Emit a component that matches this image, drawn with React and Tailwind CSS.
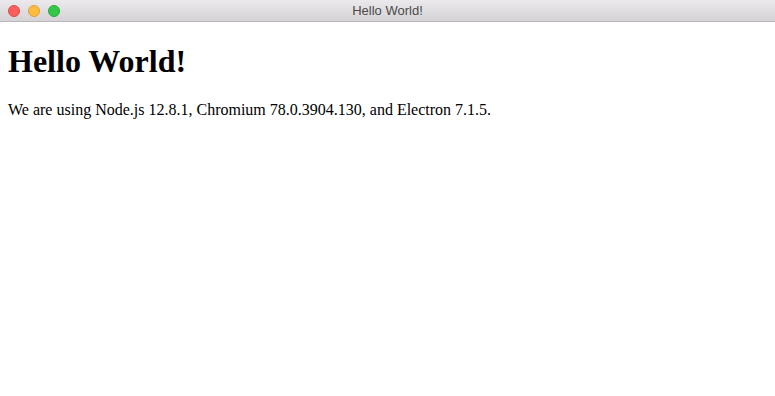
import React from 'react';

const TrafficLight = ({ color, ring }) => (
  <span className={`block h-3 w-3 rounded-full border ${color} ${ring}`} />
);

export default function App() {
  return (
    <div className="h-[396px] w-[775px] overflow-hidden bg-white">
      <div className="relative flex h-[22px] items-center border-b border-[#b9b7b9] bg-gradient-to-b from-[#ebe9eb] to-[#d5d3d5]">
        <div className="flex items-center gap-2 pl-2">
          <TrafficLight color="bg-[#fc605c]" ring="border-[#de4a45]" />
          <TrafficLight color="bg-[#fdbc40]" ring="border-[#dea134]" />
          <TrafficLight color="bg-[#34c84a]" ring="border-[#27aa35]" />
        </div>
        <div
          className="absolute inset-0 flex items-center justify-center text-[13px] text-[#4a4a4a]"
          style={{ fontFamily: '"Liberation Sans", Arial, sans-serif' }}
        >
          Hello World!
        </div>
      </div>
      <div className="px-2" style={{ fontFamily: '"Liberation Serif", "Times New Roman", serif' }}>
        <h1 className="mt-[21px] mb-[21px] text-[32px] font-bold leading-[normal] text-black">Hello World!</h1>
        <p className="text-base leading-[normal] text-black">
          We are using Node.js 12.8.1, Chromium 78.0.3904.130, and Electron 7.1.5.
        </p>
      </div>
    </div>
  );
}
